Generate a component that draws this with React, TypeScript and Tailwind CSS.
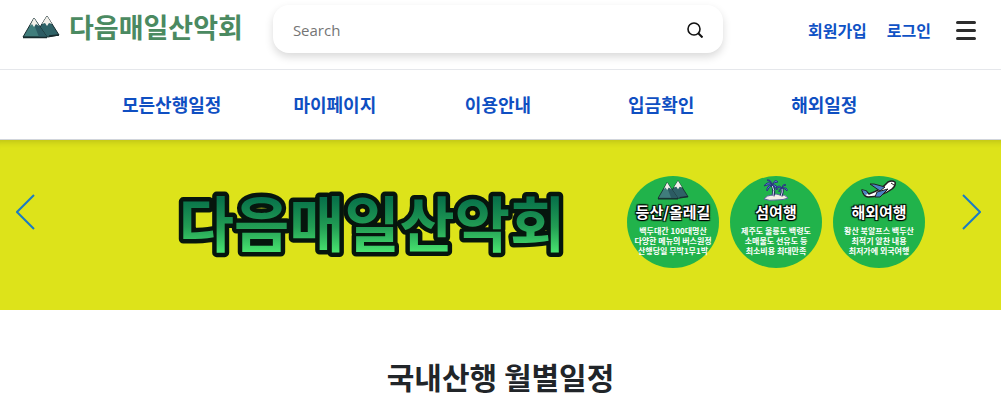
import React from 'react';

const navItems = ['모든산행일정', '마이페이지', '이용안내', '입금확인', '해외일정'];

const Mountains = ({ className }: { className: string }) => (
  <svg className={className} viewBox="0 0 38 24" fill="none" strokeLinejoin="round" aria-hidden="true">
    <path d="M13 20 L25 1 L37 20 L26 22 Z" fill="#2f6267" stroke="#172b2e" strokeWidth="1" />
    <path d="M25 1 L20 9 L23 8 L25 11 L27 8 L30 9 Z" fill="#f3f0ea" />
    <path d="M1 22 L12 3 L25 22 Z" fill="#407d7c" stroke="#172b2e" strokeWidth="1" />
    <path d="M12 3 L25 22 L17 22 L13 12 Z" fill="#2c5b63" />
    <path d="M12 3 L8 11 L10 9 L12 12 L14 9 L17 11 Z" fill="#f3f0ea" />
    <path d="M1 22.500 H25 M27 21 L37 20" stroke="#172b2e" strokeWidth="1.500" />
  </svg>
);

const PalmIsland = ({ className }: { className: string }) => (
  <svg className={className} viewBox="0 0 26 24" fill="none" aria-hidden="true">
    <path d="M1 21 Q4 17 9 17 Q13 15 17 17 Q22 16 25 20 Q21 22 13 22 Q6 23 1 21 Z" fill="#f3eee3" stroke="#53659a" />
    <path d="M9 7 Q12 12 10 18 M19 10 Q20 14 18 18" stroke="#252b64" strokeWidth="3" />
    <path d="M9 7 Q12 12 10 18 M19 10 Q20 14 18 18" stroke="#d3d9ef" strokeWidth="1" />
    <path d="M9 7 Q5 2 1 8 Q5 6 9 7 Q3 8 4 13 Q6 9 9 7 Q8 1 4 2 Q8 3 9 7 Q12 0 15 4 Q11 4 9 7 Q15 6 14 12 Q12 8 9 7" fill="#5a87df" stroke="#29357f" />
    <path d="M19 10 Q16 6 13 10 Q17 9 19 10 Q15 11 16 14 Q17 11 19 10 Q20 5 23 7 Q20 7 19 10 Q25 9 24 13 Q22 10 19 10" fill="#5a87df" stroke="#29357f" />
  </svg>
);

const Airplane = ({ className }: { className: string }) => (
  <svg className={className} viewBox="0 0 36 20" fill="none" strokeLinejoin="round" aria-hidden="true">
    <path d="M1 10 L5 11 L8 14 Q20 10 27 2 Q31 0 34 2 Q35 6 31 9 Q20 17 7 17 Q3 17 1 10 Z" fill="#fff" stroke="#202020" strokeWidth="1.500" />
    <path d="M9 4 L13 4 L24 7 L19 11 Z" fill="#4b83c3" stroke="#202020" />
    <path d="M16 12 L27 9 L19 17 L14 17 Z" fill="#4b83c3" stroke="#202020" />
    <path d="M1 10 L5 11 L7 14 L4 15 Z" fill="#4b83c3" />
    <path d="M30 3 L33 5" stroke="#202020" />
  </svg>
);

const trips = [
  {
    title: '등산/올레길',
    lines: ['백두대간 100대명산', '다양한 메뉴의 버스원정', '산행당일 무박1무1박'],
    icon: <Mountains className="h-5 w-8" />,
  },
  {
    title: '섬여행',
    lines: ['제주도 울릉도 백령도', '소매물도 선유도 등', '최소비용 최대만족'],
    icon: <PalmIsland className="h-6 w-7" />,
  },
  {
    title: '해외여행',
    lines: ['황산 북알프스 백두산', '최적기 알찬 내용', '최저가에 외국여행'],
    icon: <Airplane className="h-5 w-9" />,
  },
];

const Header = () => (
  <header className="flex h-[70px] items-start border-b border-gray-200 pt-[5px] pr-[25px] pl-[22px]">
    <a href="#" className="mr-[30px] flex h-12 shrink-0 items-center gap-[9px] pb-1">
      <Mountains className="h-6 w-[38px]" />
      <span className="text-[27px] leading-9 font-bold text-[#4b8a61]">다음매일산악회</span>
    </a>
    <form className="flex h-12 w-[450px] items-center rounded-2xl bg-white px-5 pt-1 pb-0.5 shadow-[0_4px_8px_rgba(0,0,0,0.15)]">
      <input
        type="search"
        aria-label="Search"
        placeholder="Search"
        className="min-w-0 flex-1 font-['Open_Sans',sans-serif] text-[15px] text-gray-800 outline-none placeholder:text-[#757575]"
      />
      <button type="button" aria-label="검색">
        <svg className="size-4" viewBox="0 0 16 16" fill="none" stroke="#111" strokeWidth="1.600">
          <circle cx="7" cy="7" r="6" />
          <path d="M11.300 11.300 L15.500 15.500" strokeWidth="2" />
        </svg>
      </button>
    </form>
    <div className="ml-auto flex h-12 shrink-0 items-center pt-0.5 text-base font-bold text-[#0f52c5]">
      <a href="#">회원가입</a>
      <a href="#" className="ml-5">로그인</a>
      <button type="button" aria-label="메뉴" className="ml-[25px] flex w-5 flex-col gap-[5px]">
        <span className="h-[3px] w-full rounded-full bg-[#2d2d2d]" />
        <span className="h-[3px] w-full rounded-full bg-[#2d2d2d]" />
        <span className="h-[3px] w-full rounded-full bg-[#2d2d2d]" />
      </button>
    </div>
  </header>
);

const Banner = () => (
  <section className="relative flex h-[170px] items-center bg-[#dde31a] pr-[76px] pl-[172px] shadow-[inset_0_8px_6px_-6px_rgba(0,0,0,0.15)]">
    <button type="button" aria-label="이전" className="absolute top-[54px] left-4">
      <svg className="h-9 w-5" viewBox="0 0 20 36" fill="none" stroke="#1b7bc4" strokeWidth="2">
        <path d="M18 1 L1 18 L18 35" />
      </svg>
    </button>
    <svg className="h-[100px] w-[400px] shrink-0" viewBox="0 0 400 100" role="img" aria-label="다음매일산악회">
      <defs>
        <linearGradient id="title-fill" gradientUnits="userSpaceOnUse" x1="0" y1="24" x2="0" y2="80">
          <stop offset="0" stopColor="#08724a" />
          <stop offset="0.500" stopColor="#229d54" />
          <stop offset="1" stopColor="#4ceb72" />
        </linearGradient>
      </defs>
      <text
        x="200"
        y="72"
        textAnchor="middle"
        className="text-[60px] font-bold [paint-order:stroke]"
        fill="url(#title-fill)"
        stroke="#06150d"
        strokeWidth="9"
        strokeLinejoin="round"
      >
        다음매일산악회
      </text>
    </svg>
    <ul className="ml-auto flex shrink-0 gap-[11px] pb-1.5">
      {trips.map((trip) => (
        <li key={trip.title} className="flex size-[92px] flex-col items-center rounded-full bg-[#21b34b] pt-0.5 text-white">
          <div className="flex h-6 items-center">{trip.icon}</div>
          <h3 className="mb-1 text-[15px] leading-5 font-bold whitespace-nowrap [text-shadow:1px_1px_1px_#000,-1px_-1px_1px_#000,1px_-1px_1px_#000,-1px_1px_1px_#000]">
            {trip.title}
          </h3>
          {trip.lines.map((line) => (
            <p key={line} className="text-[8px] leading-[10px] font-bold whitespace-nowrap">{line}</p>
          ))}
        </li>
      ))}
    </ul>
    <button type="button" aria-label="다음" className="absolute top-[54px] right-5">
      <svg className="h-9 w-5" viewBox="0 0 20 36" fill="none" stroke="#1b7bc4" strokeWidth="2">
        <path d="M2 1 L19 18 L2 35" />
      </svg>
    </button>
  </section>
);

export default function App() {
  return (
    <div className="min-h-screen bg-white font-['Noto_Sans_CJK_KR',sans-serif]">
      <Header />
      <nav className="grid h-[70px] grid-cols-5 items-center border-b border-gray-300 pr-[9.5%] pb-0.5 pl-[9%]">
        {navItems.map((item) => (
          <a key={item} href="#" className="text-center text-lg font-bold whitespace-nowrap text-[#0f4fc2]">
            {item}
          </a>
        ))}
      </nav>
      <Banner />
      <main className="pt-[42px]">
        <h2 className="text-center text-[30px] leading-12 font-bold text-[#212529]">국내산행 월별일정</h2>
      </main>
    </div>
  );
}
